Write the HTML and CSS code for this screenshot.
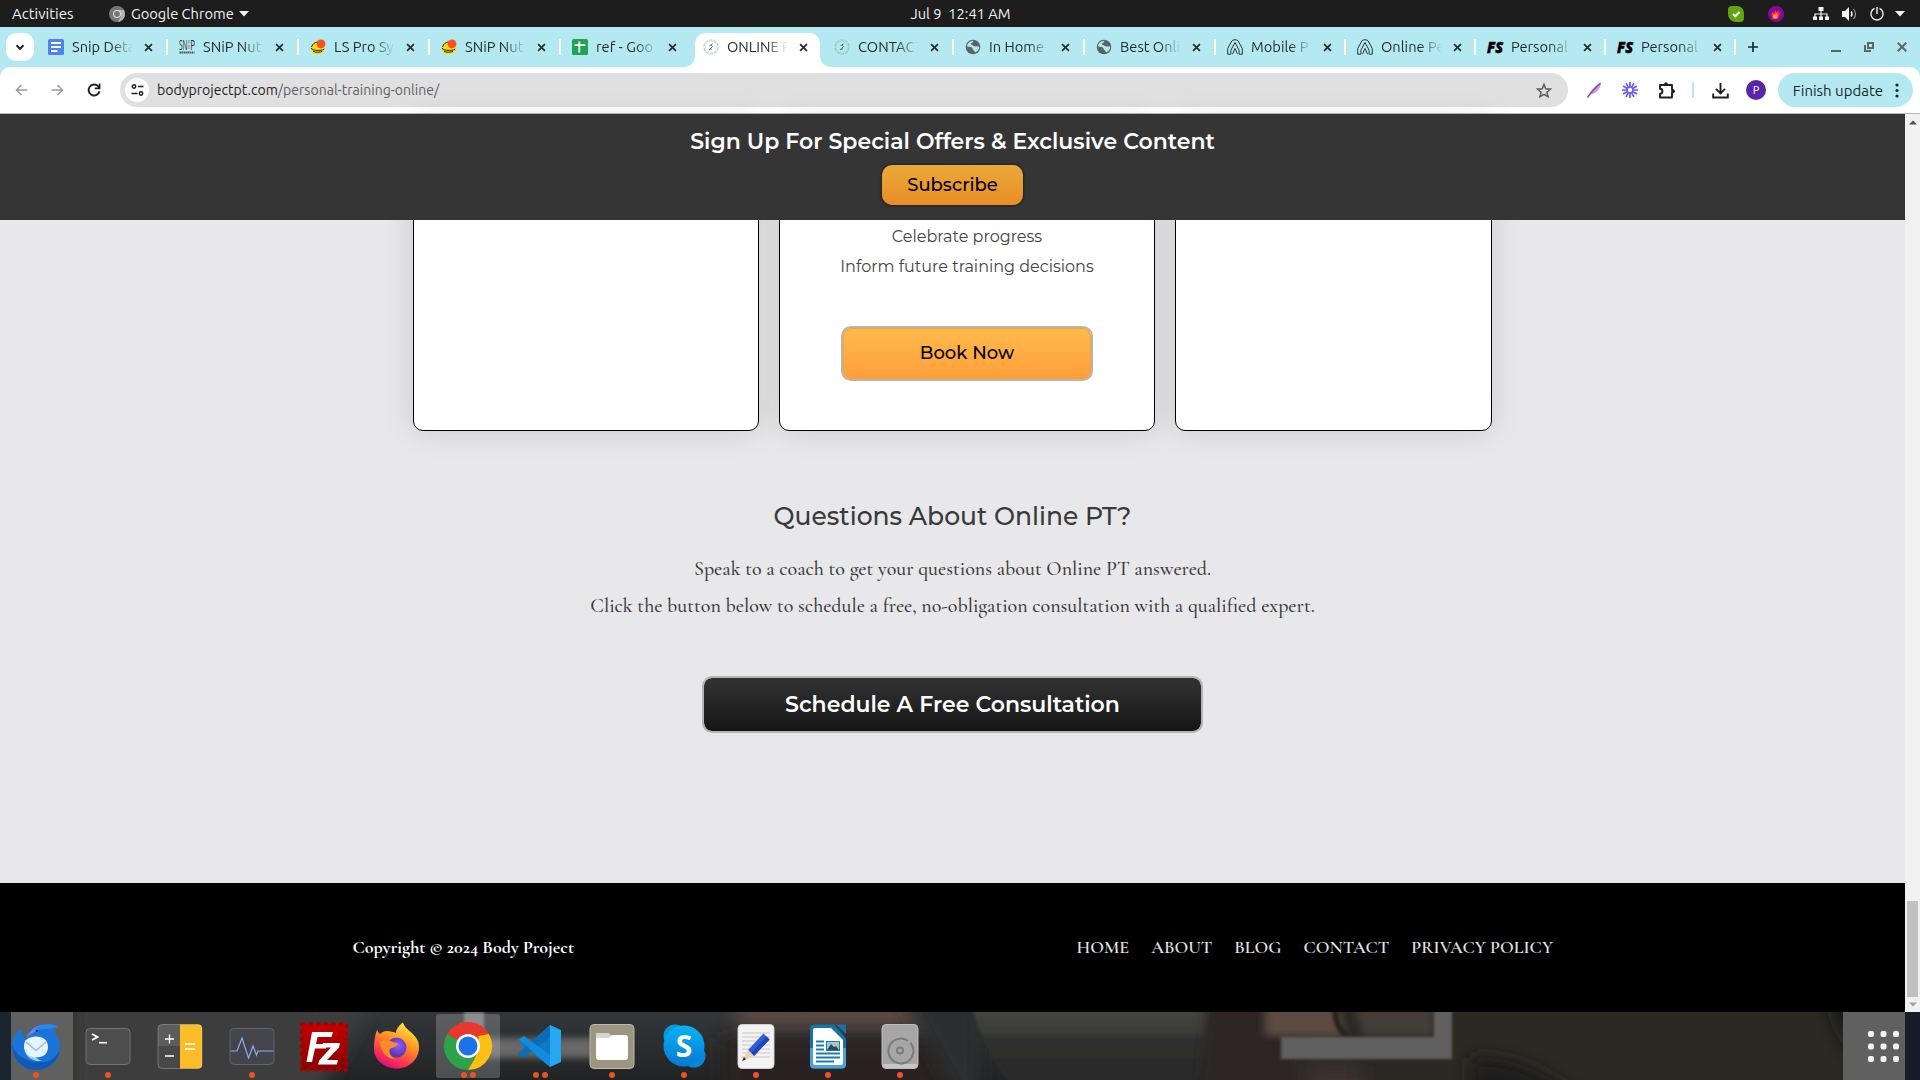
FILE: index.html
```html
<!DOCTYPE html>
<html lang="en">
<head>
<meta charset="utf-8">
<title>Online Personal Training</title>
<link rel="stylesheet" href="styles.css">
</head>
<body>
<svg width="0" height="0" class="defs" aria-hidden="true">
  <symbol id="close" viewBox="0 0 10 10"><path d="M1.2 1.2 8.8 8.8M8.8 1.2 1.2 8.8" stroke="#222a2c" stroke-width="1.9"/></symbol>
  <symbol id="docs" viewBox="0 0 16 16"><rect width="16" height="16" rx="1.500" fill="#4d82f0"/><path d="M3 4h10M3 8h10M3 12h6.500" stroke="#fff" stroke-width="1.900"/></symbol>
  <symbol id="burger" viewBox="0 0 16 16"><path d="M1 9.500C1 5 5 2.500 9 2.500s6 3 6 6.500-3 6.500-7.500 6.500S1 13 1 9.500z" fill="#f6dc20"/><path d="M1.500 8c1-3 3-4.500 6-5.200M.8 9.200c3 2.600 9 3 13.500 1M3 12.200c3 1.500 7 1.300 9 0" fill="none" stroke="#2b2a10" stroke-width="1"/><circle cx="11" cy="4.800" r="4.400" fill="#ff4d1f"/></symbol>
  <symbol id="sheets" viewBox="0 0 16 16"><rect width="16" height="16" rx="1.500" fill="#23a455"/><path d="M7.300 2.500v11M2.500 6.200h11" stroke="#fff" stroke-width="1.800"/></symbol>
  <symbol id="badge" viewBox="0 0 16 16"><circle cx="8" cy="8" r="7" fill="none" stroke="#8a9a9c" stroke-opacity=".5" stroke-width="1.200" stroke-dasharray="3.600 .8"/><circle cx="8" cy="8" r="5.600" fill="none" stroke="#8a9a9c" stroke-opacity=".25" stroke-width=".8"/><path d="M9.600 4.800 7.800 6l1.600 1.600-1.500 1.500.2 1.900M6.500 6.500l1.200-.4M7.400 9.400 6.200 11" fill="none" stroke="#444" stroke-width=".8"/></symbol>
  <symbol id="globe" viewBox="0 0 16 16"><circle cx="8" cy="8" r="7.300" fill="#5b6368"/><path d="M8.300 1.800c-.3 1.500-.8 2.200-2.300 2.500-.3 1 .3 1.900 1.700 2 .9.200 1.300 1.200 2.400 1.200 1.600 0 3-.3 4.200.2-.2 2.500-1.700 4.800-4.100 5.800-.8-1-.6-2.200-2-2.600-.8-.6-.6-2-1.600-2.600C5 8 3.500 8 2 7.300 2.300 4.200 5 2 8.300 1.800z" fill="#b5e9f1"/><path d="M9.500 2.500c2 .4 3.500 1.700 4 3.600-1.500.4-3.400.2-4-.6-.6-1-.3-2 0-3z" fill="#5b6368"/></symbol>
  <symbol id="tent" viewBox="0 0 16 16"><path d="M.7 15.200V9.500L4.800 2C5.800.3 10.200.3 11.200 2l4.100 7.500v5.700h-3.200v-4L8 3.500 3.900 11.200v4zM5.500 15.200 8 9.500l2.500 5.700" fill="none" stroke="#26363a" stroke-width="1"/></symbol>
</svg>

<header class="panel">
  <span class="activities">Activities</span>
  <span class="app-menu">
    <svg width="16" height="16" viewBox="0 0 16 16"><circle cx="8" cy="8" r="8" fill="#777"/><path d="M8 0a8 8 0 0 1 8 8c0 4-3 7.500-7 8l3-5.500L8 4h7A8 8 0 0 0 8 0z" fill="#b5b5b5"/><circle cx="8" cy="8" r="4" fill="#ddd"/><circle cx="8" cy="8" r="2.900" fill="#777"/></svg>
    Google Chrome
    <svg class="caret" width="10" height="6"><path d="M0 0h10L5 5.500z" fill="#f2f2f2"/></svg>
  </span>
  <span class="clock">Jul 9&nbsp; 12:41 AM</span>
  <span class="tray">
    <svg width="16" height="16" viewBox="0 0 16 16"><path d="M4 0h5a7 7 0 0 1 7 7v5a4 4 0 0 1-4 4H8a8 8 0 0 1-8-8V4a4 4 0 0 1 4-4z" fill="#62a60f"/><path d="m5 8 2.300 2.300L11.500 6" fill="none" stroke="#fff" stroke-width="2"/></svg>
    <svg class="flame" width="16" height="16" viewBox="0 0 16 16"><circle cx="8" cy="8" r="8" fill="#8408a4"/><path d="M4.500 13 3.200 8l2.300-3v2.500L8 3.500v3L10.500 4v3l2.300-1.500L10 13z" fill="#f0322f"/><path d="M5.500 12.500 5 9.500l1.500-2v2l2.500-3-.5 3 2-1.500-2 4.500z" fill="#ffb52e"/></svg>
    <svg class="net" width="16" height="14" viewBox="0 0 16 14"><path d="M5.500 0h5v4h-5zM0 9.500h4V13H0zM6 9.500h4V13H6zM12 9.500h4V13h-4z" fill="#f2f2f2"/><path d="M8 3v7M2 10V7h12v3" fill="none" stroke="#f2f2f2" stroke-width="1.200"/></svg>
    <svg class="vol" width="16" height="14" viewBox="0 0 16 14"><path d="M0 4h3l4-4v14l-4-4H0z" fill="#f2f2f2"/><path d="M9 4.500q2 2.500 0 5" fill="none" stroke="#f2f2f2" stroke-width="1.500"/><path d="M11.500 2q4 5 0 10" fill="none" stroke="#999" stroke-width="1.200"/></svg>
    <svg class="power" width="14" height="14" viewBox="0 0 14 14"><path d="M4.500 1.300a6.100 6.100 0 1 0 5 0M7 0v7" fill="none" stroke="#f2f2f2" stroke-width="1.400"/></svg>
    <svg class="caret" width="10" height="6"><path d="M0 0h10L5 5.500z" fill="#f2f2f2"/></svg>
  </span>
</header>

<nav class="tabstrip">
  <span class="tab-search"><svg width="10" height="7" viewBox="0 0 10 7"><path d="m1.500 1.200 3.500 3.600 3.500-3.600" fill="none" stroke="#1f2426" stroke-width="2"/></svg></span>
  <div class="tab"><svg class="fav"><use href="#docs"/></svg><span class="title">Snip Deta</span><svg class="x"><use href="#close"/></svg></div>
  <div class="tab"><svg class="fav" viewBox="0 0 16 16"><g font-family="'Open Sans',sans-serif" font-size="14" fill="#1c2b2e"><text x="0" y="10.500" textLength="8.500" lengthAdjust="spacingAndGlyphs">SN</text><text x="11.200" y="10.500" textLength="4.800" lengthAdjust="spacingAndGlyphs">P</text></g><path d="M9.800 1v3.500" stroke="#5cc88c" stroke-width="1.500"/><path d="M9.800 6v4" stroke="#e88" stroke-width="1.500"/><path d="M.5 13.500h15" stroke="#405558" stroke-width="2" stroke-dasharray="1.500 .5"/></svg><span class="title">SNiP Nut</span><svg class="x"><use href="#close"/></svg></div>
  <div class="tab"><svg class="fav"><use href="#burger"/></svg><span class="title">LS Pro Sy</span><svg class="x"><use href="#close"/></svg></div>
  <div class="tab"><svg class="fav"><use href="#burger"/></svg><span class="title">SNiP Nut</span><svg class="x"><use href="#close"/></svg></div>
  <div class="tab plain"><svg class="fav"><use href="#sheets"/></svg><span class="title">ref - Goo</span><svg class="x"><use href="#close"/></svg></div>
  <div class="tab plain active"><svg class="fav"><use href="#badge"/></svg><span class="title">ONLINE P</span><svg class="x"><use href="#close"/></svg></div>
  <div class="tab"><svg class="fav"><use href="#badge"/></svg><span class="title">CONTACT</span><svg class="x"><use href="#close"/></svg></div>
  <div class="tab"><svg class="fav"><use href="#globe"/></svg><span class="title">In Home</span><svg class="x"><use href="#close"/></svg></div>
  <div class="tab"><svg class="fav"><use href="#globe"/></svg><span class="title">Best Onli</span><svg class="x"><use href="#close"/></svg></div>
  <div class="tab narrow"><svg class="fav"><use href="#tent"/></svg><span class="title">Mobile P</span><svg class="x"><use href="#close"/></svg></div>
  <div class="tab narrow"><svg class="fav"><use href="#tent"/></svg><span class="title">Online Pe</span><svg class="x"><use href="#close"/></svg></div>
  <div class="tab narrow"><svg class="fav" viewBox="0 0 16 16"><text class="fs" x="0" y="13.500" textLength="16" lengthAdjust="spacingAndGlyphs">FS</text></svg><span class="title">Personal</span><svg class="x"><use href="#close"/></svg></div>
  <div class="tab narrow"><svg class="fav" viewBox="0 0 16 16"><text class="fs" x="0" y="13.500" textLength="16" lengthAdjust="spacingAndGlyphs">FS</text></svg><span class="title">Personal</span><svg class="x"><use href="#close"/></svg></div>
  <svg class="new-tab" width="10" height="10"><path d="M5 0v10M0 5h10" stroke="#1f2a2c" stroke-width="1.700"/></svg>
  <span class="win">
    <svg width="10" height="10"><path d="M0 9h10" stroke="#5f6669" stroke-width="2"/></svg>
    <svg width="10" height="10"><path d="M4 1h5v5H4z" fill="none" stroke="#5f6669" stroke-width="2"/><path d="M1 3v6h6" fill="none" stroke="#5f6669" stroke-width="2"/></svg>
    <svg width="10" height="10"><path d="m.7.7 8.600 8.600M9.300.7.7 9.300" stroke="#5f6669" stroke-width="2"/></svg>
  </span>
</nav>

<div class="toolbar-wrap">
<div class="toolbar">
  <svg class="back" width="13" height="12" viewBox="0 0 13 12"><path d="M12.500 6H1.500M6.500 1 1.500 6l5 5" fill="none" stroke="#9b9b9b" stroke-width="1.500"/></svg>
  <svg class="fwd" width="13" height="12" viewBox="0 0 13 12"><path d="M.5 6h11M6.500 1l5 5-5 5" fill="none" stroke="#9b9b9b" stroke-width="1.500"/></svg>
  <svg class="reload" width="14" height="14" viewBox="0 0 14 14"><path d="M12.500 8.200A5.500 5.500 0 1 1 11.200 3.300L12.500 5" fill="none" stroke="#1f1f1f" stroke-width="1.900"/><path d="M12.600.5V5.400H7.800" fill="none" stroke="#1f1f1f" stroke-width="1.700"/></svg>
  <div class="omnibox">
    <span class="site"><svg width="13" height="12" viewBox="0 0 13 12"><circle cx="3" cy="2.500" r="1.700" fill="none" stroke="#1f1f1f" stroke-width="1.500"/><path d="M7 2.500h5.500M.5 9.500h6" stroke="#1f1f1f" stroke-width="1.700"/><circle cx="10" cy="9.500" r="1.700" fill="none" stroke="#1f1f1f" stroke-width="1.500"/></svg></span>
    <span class="url">bodyprojectpt.com<i>/personal-training-online/</i></span>
    <svg class="star" width="16" height="15" viewBox="0 0 16 15"><path d="m8 1.500 1.800 4.300 4.600.4-3.500 3 1.100 4.500L8 11.300l-4 2.400 1.100-4.500-3.500-3 4.600-.4z" fill="none" stroke="#5b5b5b" stroke-width="1.500"/></svg>
  </div>
  <svg class="feather" width="15" height="16" viewBox="0 0 15 16"><path d="M2 14C3 9 7 4 14 .5 14 6 10 11 4 12.500z" fill="#c3a0e0"/><path d="M.5 15.500C4 10 8 6 13.500 1" fill="none" stroke="#8443ab" stroke-width="1.400"/></svg>
  <svg class="loom" width="16" height="16" viewBox="-8 -8 16 16"><path d="M0-8V8M-8 0H8M-6.900-4 6.900 4M6.900-4-6.900 4M-4-6.900 4 6.900M4-6.900-4 6.900" stroke="#6257f2" stroke-width="1.700"/><circle r="2.200" fill="#fff"/></svg>
  <svg class="puzzle" width="17" height="17" viewBox="0 0 17 17"><path d="M2 3h12v4.500a1.900 1.900 0 0 1 0 3.500v4.500H2v-3.800c3.300 0 3.300-5 0-5z" fill="none" stroke="#1f1f1f" stroke-width="1.900" stroke-linejoin="round"/><circle cx="8" cy="2.200" r="1.900" fill="#1f1f1f"/><circle cx="15" cy="9.200" r="1.900" fill="#1f1f1f"/></svg>
  <span class="divider"></span>
  <svg class="download" width="17" height="17" viewBox="0 0 17 17"><path d="M8.500 1v10M4 6.800l4.500 4.500L13 6.800" fill="none" stroke="#1f1f1f" stroke-width="1.900"/><path d="M1.200 11.500v4h14.600v-4" fill="none" stroke="#1f1f1f" stroke-width="1.900"/></svg>
  <span class="avatar">P</span>
  <span class="update">Finish update<svg width="4" height="15"><circle cx="2" cy="2" r="1.600"/><circle cx="2" cy="7.500" r="1.600"/><circle cx="2" cy="13" r="1.600"/></svg></span>
</div>
</div>

<div class="viewport">
  <div class="page">
    <section class="signup">
      <h2>Sign Up For Special Offers &amp; Exclusive Content</h2>
      <a class="subscribe">Subscribe</a>
    </section>
    <main>
      <div class="cards">
        <div class="card"></div>
        <div class="card">
          <p>Celebrate progress</p>
          <p>Inform future training decisions</p>
          <a class="book">Book Now</a>
        </div>
        <div class="card"></div>
      </div>
      <section class="questions">
        <h3>Questions About Online PT?</h3>
        <p>Speak to a coach to get your questions about Online PT answered.</p>
        <p>Click the button below to schedule a free, no-obligation consultation with a qualified expert.</p>
        <a class="schedule">Schedule A Free Consultation</a>
      </section>
    </main>
    <footer>
      <span class="copy">Copyright © 2024 Body Project</span>
      <nav class="links"><a>HOME</a><a>ABOUT</a><a>BLOG</a><a>CONTACT</a><a>PRIVACY POLICY</a></nav>
    </footer>
  </div>
  <div class="scrollbar">
    <svg width="8" height="5"><path d="M0 4.500h8L4 .5z" fill="#505050"/></svg>
    <span class="thumb"></span>
    <svg width="8" height="5"><path d="M0 .5h8l-4 4z" fill="#a3a3a3"/></svg>
  </div>
</div>

<div class="dock">
  <svg class="wall" width="1920" height="68" viewBox="0 0 1920 68" preserveAspectRatio="none">
    <defs>
      <filter id="b6" filterUnits="userSpaceOnUse" x="-50" y="-100" width="2020" height="270"><feGaussianBlur stdDeviation="9"/></filter>
      <filter id="b2" filterUnits="userSpaceOnUse" x="-50" y="-100" width="2020" height="270"><feGaussianBlur stdDeviation="1.500"/></filter>
      <filter id="b4" filterUnits="userSpaceOnUse" x="-50" y="-100" width="2020" height="270"><feGaussianBlur stdDeviation="4 3"/></filter>
      <linearGradient id="fade" x2="0" y2="1"><stop offset="0" stop-color="#34373a"/><stop offset="1" stop-color="#212324"/></linearGradient>
      <linearGradient id="hill" x2="0" y2="1"><stop offset="0" stop-color="#43463f"/><stop offset=".33" stop-color="#3b3c37"/><stop offset=".42" stop-color="#2e2e2d"/><stop offset="1" stop-color="#2a2a2a"/></linearGradient>
    </defs>
    <rect width="1920" height="68" fill="#2c2924"/>
    <rect x="300" width="940" height="68" fill="url(#fade)"/>
    <path d="M70-30h310L310 98H70z" fill="#3c3c3c" filter="url(#b6)"/>
    <path d="M740-20h210v38H735z" fill="#5a4a42" filter="url(#b6)"/>
    <path d="M720 26h250v60H720z" fill="#292322" filter="url(#b6)"/>
    <path d="M900-20h80v110h-20z" fill="#2b2d2e" filter="url(#b6)"/>
    <path d="M972-4h240l-14 76h-188q-26-34-38-76z" fill="url(#hill)" filter="url(#b2)"/>
    <path d="M1208-20h90v110h-100z" fill="#2e2825" filter="url(#b4)"/>
    <path d="M1265-20h70l10 44h-80z" fill="#5b4b40" filter="url(#b4)"/>
    <path d="M1350-20h84v44h-70z" fill="#443c38" filter="url(#b4)"/>
    <path d="M1335-4q0 20 14 30" fill="none" stroke="#25241f" stroke-width="6" filter="url(#b2)"/>
    <path d="M1300 54h60v40h-40z" fill="#3c332e" filter="url(#b6)"/>
    <path d="M1470 46q60-5 120 50h-120z" fill="#1d1c1a" filter="url(#b6)"/>
    <path d="M1826-20h24v70z" fill="#171614" filter="url(#b6)"/>
    <path d="M1434-4h18v51h-171V25h153z" fill="#616161" filter="url(#b2)"/>
    <rect x="484" y="26" width="112" height="20" fill="#686868" filter="url(#b4)"/>
    <rect x="464" y="-8" width="20" height="54" fill="#707070" filter="url(#b2)"/>
    <rect width="12" height="68" fill="#1a2530"/><rect x="11" width="62" height="68" fill="#606060"/>
    <rect x="1843" width="62" height="68" fill="#606060"/><rect x="1905" width="15" height="68" fill="#161d29"/>
  </svg>

  <span class="app"><svg width="48" height="48" viewBox="0 0 48 48">
    <path d="M0 20C1 12 5 7 10 5c0 5 1 8 3 11l2-4C17 4 25 0 35 0c5 0 9 1 11 3l-5 3c4 5 7 10 7 17 0 13-10 23-24 23C9 46-1 34 0 20z" fill="#1b74d8"/>
    <path d="M0 20c0 16 11 26 24 26 12 0 22-8 24-20-5 9-12 13-22 12C12 37 3 31 0 20z" fill="#1259b4"/>
    <path d="M15 13C19 4 27 0 38 0c-7 0-13 3-15 8-3 1-5 3-8 5z" fill="#7a83e0"/><path d="M22 6C30-1 40-1 46 3L36 5z" fill="#2a88ea"/>
    <path d="M14 15C9 28 16 38 30 37 24 35 15 28 14 15z" fill="#8ed1fb"/><path d="M12 22c0-6 5-9.500 12-9.500S36 16 36 23s-5 10.500-12 10.500S12 29 12 22z" fill="#e6f4ff"/><path d="m14 18 10 8.500L34 18" fill="none" stroke="#9bbbd6" stroke-width="1.500"/><circle cx="25" cy="7" r="1" fill="#123"/></svg><b></b></span>
  <span class="app"><svg width="48" height="48" viewBox="0 0 48 48"><rect x="2" y="4.500" width="44" height="36" rx="4" fill="#4d4d4d" stroke="#727272"/><path d="m8 10 5.500 3L8 16" fill="none" stroke="#fff" stroke-width="1.900"/><path d="M15 18.700h8" stroke="#fff" stroke-width="1.600"/></svg><b></b></span>
  <span class="app"><svg width="48" height="48" viewBox="0 0 48 48"><rect x="2" y=".5" width="44" height="44" rx="4" fill="#5c5c5c"/><path d="M2 22h22v22.500H6a4 4 0 0 1-4-4z" fill="#484848"/><path d="M24 .5h18a4 4 0 0 1 4 4v36a4 4 0 0 1-4 4H24z" fill="#fcbe28"/><path d="M9 15h9M13.500 10.500v9M9 32h9M29 20h10M29 25h10" stroke="#fff" stroke-width="1.300"/><rect x="2" y=".5" width="44" height="44" rx="4" fill="none" stroke="#fff" stroke-opacity=".25"/></svg></span>
  <span class="app"><svg width="48" height="48" viewBox="0 0 48 48"><rect x="2" y="4.500" width="44" height="36" rx="4" fill="#43454a" stroke="#63656a"/><path d="M2.500 27H9l5-13 6.500 20L25 22l3.500 9 1.500-4h15.500" fill="none" stroke="#8fabf0" stroke-width="1.200"/></svg><b></b></span>
  <span class="app"><svg width="48" height="48" viewBox="0 0 48 48"><defs><linearGradient id="fz" x2="0" y2="1"><stop offset="0" stop-color="#c40000"/><stop offset="1" stop-color="#8a0000"/></linearGradient></defs><path d="M1.500 0h45v46h-45z" fill="url(#fz)" stroke="#a80000" stroke-width="3" stroke-dasharray="4 3.500"/><path d="M12 8h21l-1.500 5H17.500l-1.500 7h11l-1 4.500H15L12 38H6.500z" fill="#fff"/><path d="M23 19h17l-1 4.500L27 36h11l-1.200 4.500H18l1.500-4.500L31 23.500h-9z" fill="#fff"/></svg></span>
  <span class="app"><svg width="48" height="48" viewBox="0 0 48 48"><defs><linearGradient id="ff" x1=".8" y1="0" x2=".3" y2="1"><stop offset="0" stop-color="#fff24a"/><stop offset=".4" stop-color="#ff9a22"/><stop offset=".75" stop-color="#ff3a4a"/><stop offset="1" stop-color="#d80a86"/></linearGradient><radialGradient id="fp" cx=".6" cy=".4"><stop offset="0" stop-color="#9059ff"/><stop offset="1" stop-color="#5b3bb5"/></radialGradient></defs><path d="M5 6c1 2 2 3 3 4 2-2 4-3 7-3 3 0 7 1 9 2 0-3 2-7 7-10.500 1 4 4 6 7 9 6 5 9 9 9 16 0 12-10 21-22 21S1 36 2 23C2 17 3 11 5 6z" fill="url(#ff)"/><circle cx="24.500" cy="23.500" r="10" fill="url(#fp)"/><path d="M8 18c5-3 9-2 13 0 2 1 4 0 5 2-2 4-6 3-8 5-2 4 1 8 6 10-9 0-15-6-16-17z" fill="#ff8a28"/></svg></span>
  <span class="app on"><svg width="48" height="48" viewBox="0 0 48 48"><path d="M24 22 3.200 10A24 24 0 0 1 44.800 10z" fill="#e8382d"/><path d="M3.200 10A24 24 0 0 0 24 46l10-18-10-6z" fill="#2da24a"/><path d="M44.800 10A24 24 0 0 1 24 46l10.400-18V12z" fill="#fcc010"/><path d="M24 10h20.800c-3-6-11-11.500-20.800-12z" fill="#e8382d"/><circle cx="24" cy="22" r="12" fill="#fff"/><circle cx="24" cy="22" r="9.500" fill="#1a73e8"/></svg><b></b><b></b></span>
  <span class="app"><svg width="48" height="48" viewBox="0 0 48 48"><path d="M34 1 14 20 6 13.500 3 15.500v3L34 43z" fill="#1079c4"/><path d="M34 1 3 28.500v3l4 2.200L34 13z" fill="#0b6cb8"/><path d="M3 15.500 34 43V31L8 12z" fill="#118bdc"/><path d="m34 1 11 5v32l-11 5z" fill="#27a6f2"/></svg><b></b><b></b></span>
  <span class="app"><svg width="48" height="48" viewBox="0 0 48 48"><rect x="2" y=".5" width="44" height="44" rx="4" fill="#9c9582" stroke="#bdb7a6"/><path d="M8 9h13l3 4h15v9H8z" fill="#d9d5ca"/><path d="M8 14h13l3-3h13a3 3 0 0 1 3 3v19a3 3 0 0 1-3 3H11a3 3 0 0 1-3-3z" fill="#fff"/></svg><b></b></span>
  <span class="app"><svg width="48" height="48" viewBox="0 0 48 48"><defs><linearGradient id="sk" x2="0" y2="1"><stop offset="0" stop-color="#08b4f2"/><stop offset="1" stop-color="#0878d4"/></linearGradient></defs><circle cx="15" cy="12" r="11.500" fill="#0898e0"/><circle cx="34" cy="32" r="11.500" fill="#0b87d8"/><circle cx="24" cy="22" r="20.500" fill="url(#sk)"/><text x="24" y="32.500" text-anchor="middle" font-family="'Open Sans',sans-serif" font-weight="700" font-size="30" fill="#fff">S</text></svg><b></b></span>
  <span class="app"><svg width="48" height="48" viewBox="0 0 48 48"><rect x="6" y=".5" width="36" height="44" rx="4" fill="#f3f3f3" stroke="#cfcfcf"/><path d="M10 9h28M10 13h28M10 17h28M10 21h28M10 25h28M10 29h28M10 33h28" stroke="#c6c6c6"/><path d="m31.500 9.500 6 6L22 32l-6-6z" fill="#2f5fd8"/><path d="m34.500 12.500 3 3L22 32l-3-3z" fill="#1f46b5"/><path d="m16 26 6 6-12 5z" fill="#f5cfa5"/><path d="m12 33 2 2.500-4 1.500z" fill="#333"/></svg><b></b></span>
  <span class="app"><svg width="48" height="48" viewBox="0 0 48 48"><path d="M10 .5h20l12 14v26a4 4 0 0 1-4 4H10a4 4 0 0 1-4-4v-36a4 4 0 0 1 4-4z" fill="#1673a8"/><path d="M6 24h36v16.500a4 4 0 0 1-4 4H10a4 4 0 0 1-4-4z" fill="#4aa5d6"/><path d="M11 4h16l12 12v23a2 2 0 0 1-2 2H11a2 2 0 0 1-2-2V6a2 2 0 0 1 2-2z" fill="#fff"/><path d="M32 .5h10V10z" fill="#1673a8"/><path d="M12 17.500h8M12 21.500h8M12 25.500h8M12 29.500h24M12 33.500h24M12 37.500h18" stroke="#1a7cb5" stroke-width="2"/><path d="M22 17h14v10H22z" fill="#1a7cb5"/><path d="M23 18h12v8H23z" fill="#8fcdf0"/><path d="m23 26 4-6 3 3 2-1 3 4z" fill="#444"/><circle cx="33.500" cy="19" r="1.500" fill="#f5c518"/></svg><b></b></span>
  <span class="app"><svg width="48" height="48" viewBox="0 0 48 48"><rect x="6" y=".5" width="36" height="44" rx="4" fill="#a6a6a6" stroke="#bcbcbc"/><path d="M7 40h34v1a3 3 0 0 1-3 3H10a3 3 0 0 1-3-3z" fill="#c6c6c6"/><path d="M34.500 19A12.500 12.500 0 1 1 29 15.200L32 17M36 22l-1-3" fill="none" stroke="#7b7b7b" stroke-width="2"/><circle cx="24" cy="26.500" r="3" fill="none" stroke="#7b7b7b" stroke-width="2"/></svg><b></b></span>
  <svg class="grid" width="32" height="32" viewBox="0 0 32 32" fill="#f2f2f2"><rect width="6" height="6" rx="2"/><rect x="12.500" width="6" height="6" rx="2"/><rect x="25" width="6" height="6" rx="2"/><rect y="12.500" width="6" height="6" rx="2"/><rect x="12.500" y="12.500" width="6" height="6" rx="2"/><rect x="25" y="12.500" width="6" height="6" rx="2"/><rect y="25" width="6" height="6" rx="2"/><rect x="12.500" y="25" width="6" height="6" rx="2"/><rect x="25" y="25" width="6" height="6" rx="2"/></svg>
</div>
</body>
</html>
```
FILE: styles.css
```css
* { box-sizing: border-box; }
body { margin: 0; width: 1920px; height: 1080px; overflow: hidden; display: flex; flex-direction: column; background: #000; font-family: Ubuntu, "Open Sans", sans-serif; }
svg { display: block; flex: none; overflow: visible; }
h2, h3, p { margin: 0; }
.defs { position: absolute; }

/* Desktop top panel */
.panel { height: 27px; flex: none; display: flex; align-items: center; background: #1d1d1d; color: #f2f2f2; font-size: 14.67px; line-height: 27px; }
.activities { width: 109px; padding-left: 12px; font-size: 15px; }
.app-menu { width: 801.5px; display: flex; align-items: center; gap: 6px; }
.app-menu .caret { margin-left: -1px; }
.tray { margin-left: auto; display: flex; align-items: center; padding-right: 15px; }
.flame { margin-left: 24px; }
.net { margin-left: 29px; }
.vol { margin-left: 13px; }
.power { margin-left: 12px; }
.tray .caret { margin-left: 11px; }

/* Tabs */
.tabstrip { height: 40px; flex: none; display: flex; align-items: center; background: #b5e9f1; color: #1f2a2c; }
.tab-search { width: 28px; height: 28px; margin: 0 3px 0 6px; border-radius: 10px; background: #fff; display: grid; place-items: center; flex: none; }
.tab { width: 131px; height: 28px; flex: none; display: flex; align-items: center; padding-left: 11px; position: relative; }
.tab.narrow { width: 130px; }
.tab::after { content: ""; width: 2px; height: 16px; background: #fff; margin-left: auto; }
.tab.plain::after { visibility: hidden; }
.tab.active { align-self: stretch; height: auto; margin-top: 6px; padding-bottom: 6px; border-radius: 10px 10px 0 0; background: #fff; clip-path: none; width: 125px; margin-left: 3px; margin-right: 3px; padding-left: 8px; }
.tab.active::before { content: ""; position: absolute; left: -10px; right: -10px; bottom: 0; height: 10px; background: radial-gradient(circle at 0 0, transparent 9.5px, #fff 10px) 0 0 / 10px 10px no-repeat, radial-gradient(circle at 100% 0, transparent 9.5px, #fff 10px) 100% 0 / 10px 10px no-repeat; }
.fav { width: 16px; height: 16px; }
.fs { font: italic 800 16px "Open Sans", "Liberation Sans", sans-serif; fill: #000; stroke: #000; stroke-width: .5px; }
.title { width: 61px; margin-left: 8px; overflow: hidden; white-space: nowrap; font-size: 14.67px; line-height: 20px; -webkit-mask-image: linear-gradient(90deg, #000 64%, transparent 100%); mask-image: linear-gradient(90deg, #000 64%, transparent 100%); }
.x { width: 9px; height: 9px; margin-left: 11px; }
.new-tab { margin-left: 12px; }
.win { margin-left: auto; display: flex; gap: 23px; padding-right: 13px; }

/* Toolbar */
.toolbar-wrap { height: 47px; flex: none; background: #b5e9f1; }
.toolbar { height: 47px; display: flex; align-items: center; background: #fff; border-radius: 10px 10px 0 0; border-bottom: 1px solid #b9b9b9; padding: 0 7px 0 15px; }
.fwd { margin-left: 23px; }
.reload { margin-left: 23px; }
.omnibox { width: 1448px; height: 34px; margin-left: 19px; border-radius: 17px; background: #e0e0e0; display: flex; align-items: center; padding: 0 16px 0 5px; flex: none; }
.site { width: 24px; height: 24px; border-radius: 50%; background: #fff; display: grid; place-items: center; }
.url { margin-left: 8px; font-size: 14.08px; color: #1f1f1f; }
.url i { font-style: normal; color: #5f6164; }
.star { margin-left: auto; }
.feather { margin-left: 19px; }
.loom { margin-left: 20px; }
.puzzle { margin-left: 20px; }
.divider { width: 2px; height: 16px; margin-left: 17px; background: #b5e9f1; }
.download { margin-left: 18px; }
.avatar { width: 20px; height: 20px; margin-left: 17px; border-radius: 50%; background: #5826a6; color: #fff; font-size: 11px; line-height: 20px; text-align: center; }
.update { width: 136px; height: 34px; margin-left: 12px; border-radius: 17px; background: #b5e9f1; color: #17282b; font-size: 15px; display: flex; align-items: center; padding-left: 15px; }
.update svg { margin-left: 12px; fill: #17282b; }

/* Page */
.viewport { height: 898px; flex: none; display: flex; }
.page { width: 1905px; display: flex; flex-direction: column; background: #e8e8ea; font-family: Montserrat, "Noto Sans", sans-serif; }
.signup { height: 106px; flex: none; position: relative; z-index: 1; background: #353535; display: flex; flex-direction: column; align-items: center; }
.signup h2 { margin-top: 13px; font-size: 22px; font-weight: 600; line-height: 30px; color: #fff; }
.subscribe { width: 141px; height: 40px; margin-top: 8px; border-radius: 10px; background: linear-gradient(#e9a937, #ea8d28); box-shadow: 0 0 2px 1px #1c2026; font-size: 18px; font-weight: 500; line-height: 41px; text-align: center; color: #000; }
main { height: 663px; flex: none; display: flex; flex-direction: column; align-items: center; }
.cards { height: 311px; margin-top: -100px; flex: none; display: grid; grid-template-columns: 346px 376px 317px; gap: 20px; }
.card { border: 1px solid #000; border-radius: 10px; background: #fff; box-shadow: 0 0 30px rgba(0, 0, 0, .13); padding-top: 101px; display: flex; flex-direction: column; align-items: center; }
.card p { font-size: 16px; line-height: 30px; color: #444; }
.book { width: 252px; height: 55px; margin-top: 44px; border: 2px solid #bfb3a8; border-radius: 10px; background: linear-gradient(#ffbb4c, #ff9e3a) padding-box; box-shadow: inset 0 0 1px 1px #f5a23a; font-size: 18px; font-weight: 500; line-height: 50px; text-align: center; color: #000; }
.questions { margin-top: 65px; display: flex; flex-direction: column; align-items: center; color: #3a3a3a; }
.questions h3 { font-size: 25px; font-weight: 500; line-height: 40px; }
.questions p { font-family: "Cormorant Garamond", "Liberation Serif", serif; font-size: 20px; font-weight: 500; line-height: 37px; }
.questions h3 + p { margin-top: 15px; }
.schedule { width: 501px; height: 57px; margin-top: 51px; border: 2px solid #b4b4b4; border-radius: 10px; background: linear-gradient(#323232, #161616) padding-box; font-size: 22px; font-weight: 600; line-height: 53px; text-align: center; color: #fff; }
footer { height: 129px; flex: none; display: flex; align-items: center; justify-content: space-between; padding: 0 352px 2px 352.5px; background: #000; color: #fff; font-family: "Cormorant Garamond", "Liberation Serif", serif; font-size: 18px; }
.copy { font-weight: 700; }
.links { display: flex; gap: 22px; font-weight: 600; color: #e2e2e2; }
.scrollbar { width: 15px; background: #f1f1f1; display: flex; flex-direction: column; align-items: center; padding: 6px 0 5px; }
.thumb { width: 11px; height: 96px; margin-top: auto; margin-bottom: 5px; background: #c1c1c1; }

/* Dock */
.dock { height: 68px; flex: none; position: relative; display: flex; align-items: stretch; overflow: hidden; }
.wall { position: absolute; left: 0; top: 0; }
.app { position: relative; width: 64px; margin: 2px 4px; border-radius: 3px; display: flex; flex-wrap: wrap; justify-content: center; align-content: flex-start; gap: 0 3px; padding-top: 10px; }
.app svg { margin: 0 8px; }
.app.on { background: rgba(255, 255, 255, .2); }
.app b { width: 6px; height: 6px; border-radius: 50%; background: #e95420; }
.grid { position: relative; margin: 19px 20px 0 auto; }
```
